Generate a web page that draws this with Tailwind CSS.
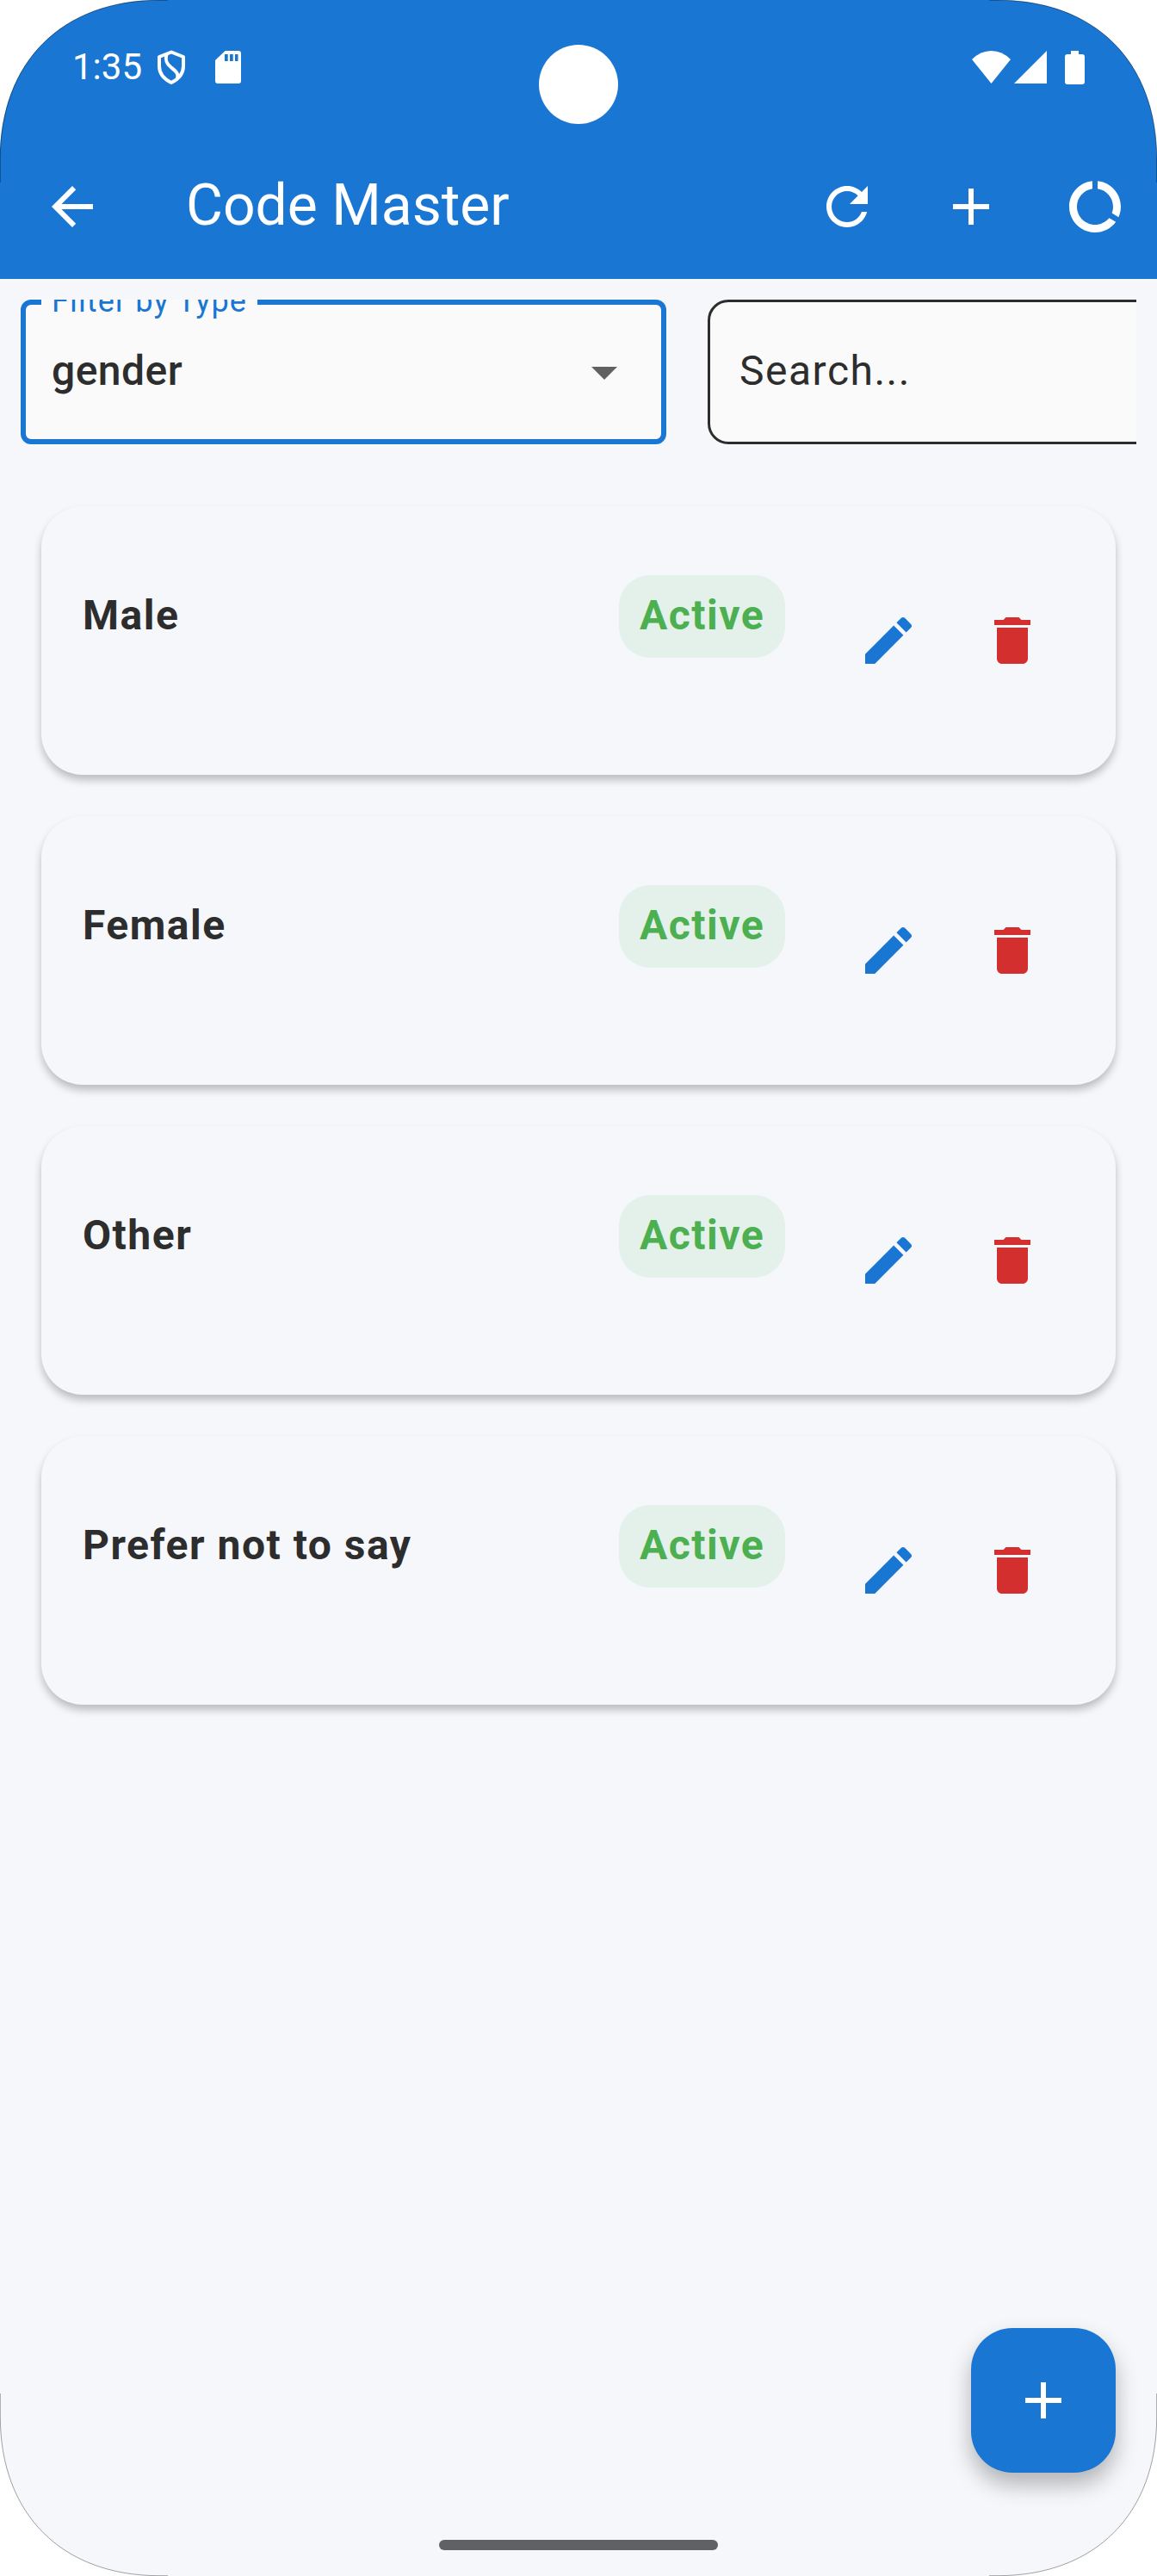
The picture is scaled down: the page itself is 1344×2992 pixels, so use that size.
<!DOCTYPE html>
<html lang="en">
<head>
<meta charset="utf-8">
<title>Code Master</title>
<script src="https://cdn.jsdelivr.net/npm/@tailwindcss/browser@4"></script>
</head>
<body class="bg-white">
<svg class="hidden">
  <symbol id="edit" viewBox="0 0 24 24"><path d="M3 17.25V21h3.75L17.81 9.94l-3.75-3.75L3 17.25zM20.71 7.04c.39-.39.39-1.02 0-1.41l-2.34-2.34c-.39-.39-1.02-.39-1.41 0l-1.83 1.83 3.75 3.75 1.83-1.83z"/></symbol>
  <symbol id="trash" viewBox="0 0 24 24"><path d="M6 19c0 1.1.9 2 2 2h8c1.1 0 2-.9 2-2V7H6v12zM19 4h-3.5l-1-1h-5l-1 1H5v2h14V4z"/></symbol>
  <symbol id="add" viewBox="0 0 24 24"><path d="M19 13h-6v6h-2v-6H5v-2h6V5h2v6h6v2z"/></symbol>
  <symbol id="corner" viewBox="0 0 240 240"><path d="M0 0V185C0 72 72 0 185 0z" fill="#fff"/><path d="M.3 212V185C.3 72 72 .3 185 .3H195" fill="none" stroke="#000" stroke-opacity=".45" stroke-width=".8"/></symbol>
</svg>
<div class="relative flex h-[2992px] w-[1344px] flex-col overflow-hidden bg-[#f5f7fb] font-[Roboto,sans-serif] text-[#2d2d2d]">
  <header class="h-[324px] bg-[#1976d2] text-white">
    <div class="flex h-[156px] items-center px-[84px]">
      <span class="text-[42px] leading-none">1:35</span>
      <svg class="ml-[17px] h-[40px] w-[34px]" viewBox="0 0 34 40" fill="none" stroke="#fff" stroke-width="4" stroke-linejoin="round"><path d="M17 2.500 31 8v11c0 9-6 15-14 19C9 34 3 28 3 19V8z"/><path d="M11.500 5c-2 7 0 11 5 15 6 5 9 7 7.500 13"/></svg>
      <svg class="ml-[34px] h-[38px] w-[30px]" viewBox="0 0 30 38"><path fill="#fff" d="M11.500 0H27q3 0 3 3v32q0 3-3 3H3q-3 0-3-3V11z"/><path fill="#1976d2" d="M11 4h3.700v8H11zM17 4h3.700v8H17zM23 4h3.500v8H23z"/></svg>
      <svg class="ml-auto h-[38px] w-[45px]" viewBox="0 0 45 38" fill="#fff"><path d="M0 10Q10 0 22.500 0T45 10L22.500 38z"/></svg>
      <svg class="ml-[4px] h-[38px] w-[38px]" viewBox="0 0 38 38" fill="#fff"><path d="M38 0v38H0z"/></svg>
      <svg class="ml-[21px] h-[39px] w-[23px]" viewBox="0 0 23 39" fill="#fff"><path d="M7 0h9v4h4q3 0 3 3v29q0 3-3 3H3q-3 0-3-3V7q0-3 3-3h4z"/></svg>
    </div>
    <div class="flex h-[168px] items-center pr-[36px] pl-[48px]">
      <svg class="size-[72px]" viewBox="0 0 24 24" fill="#fff"><path d="M20 11H7.830l5.590-5.590L12 4l-8 8 8 8 1.410-1.410L7.830 13H20v-2z"/></svg>
      <h1 class="mb-[2px] ml-[96px] text-[66px] leading-none">Code Master</h1>
      <div class="ml-auto flex gap-[72px]">
        <svg class="size-[72px]" viewBox="0 0 24 24" fill="#fff"><path d="M17.650 6.350C16.200 4.900 14.210 4 12 4c-4.420 0-7.990 3.580-7.990 8s3.570 8 7.990 8c3.730 0 6.840-2.550 7.730-6h-2.080c-.82 2.330-3.040 4-5.650 4-3.310 0-6-2.690-6-6s2.690-6 6-6c1.660 0 3.140.69 4.220 1.780L13 11h7V4l-2.350 2.350z"/></svg>
        <svg class="size-[72px]" fill="#fff"><use href="#add"/></svg>
        <svg class="size-[72px]" viewBox="0 0 24 24" fill="#fff"><path d="M13 2.050v3.030c3.390.49 6 3.390 6 6.920 0 .9-.18 1.750-.48 2.540l2.600 1.530c.56-1.240.88-2.620.88-4.070 0-5.180-3.950-9.450-9-9.950zM12 19c-3.870 0-7-3.130-7-7 0-3.530 2.610-6.430 6-6.920V2.050c-5.060.5-9 4.760-9 9.950 0 5.520 4.470 10 9.990 10 3.310 0 6.240-1.610 8.060-4.090l-2.600-1.530C16.170 17.980 14.210 19 12 19z"/></svg>
      </div>
    </div>
  </header>

  <section class="mx-[24px] mt-[24px] flex h-[168px] gap-[48px] overflow-hidden">
    <div class="relative flex w-[750px] shrink-0 items-center justify-between rounded-[12px] border-[6px] border-[#1976d2] bg-[#fafafa] px-[30px]">
      <span class="absolute -top-[29px] left-[18px] h-[50px] w-[251px] bg-[#fafafa] pl-[12px] text-[36px] leading-[50px] tracking-[1.125px] whitespace-nowrap text-[#1976d2]">Filter by Type</span>
      <span class="mb-[2px] text-[48px] leading-none font-medium tracking-[0.45px]">gender</span>
      <svg class="size-[72px]" viewBox="0 0 24 24" fill="#616161"><path d="M7 10l5 5 5-5z"/></svg>
    </div>
    <div class="flex w-[750px] shrink-0 items-center rounded-[24px] border-[3px] border-[#2d2d2d] bg-[#fafafa] pl-[34px]">
      <span class="mb-[2px] text-[48px] leading-none tracking-[1.5px]">Search...</span>
    </div>
  </section>

  <main id="list" class="mx-[48px] mt-[72px] flex flex-col gap-[48px]"></main>
  <template id="card">
    <article class="flex h-[312px] items-center rounded-[48px] bg-[#f5f7fb] px-[48px] shadow-[0_6px_10px_rgba(0,0,0,0.24)]">
      <h2 class="mb-[58px] flex-1 text-[48px] leading-[72px] font-bold tracking-[1.5px]"></h2>
      <span class="mb-[56px] flex h-[96px] w-[193px] items-center rounded-[36px] bg-[#e4f0ea] pb-[2px] pl-[24px] text-[48px] leading-none font-bold tracking-[1.5px] text-[#4caf50]">Active</span>
      <div class="mr-[36px] ml-[84px] flex gap-[72px]">
        <svg class="size-[72px]" fill="#1976d2"><use href="#edit"/></svg>
        <svg class="size-[72px]" fill="#d32f2f"><use href="#trash"/></svg>
      </div>
    </article>
  </template>

  <button class="absolute top-[2704px] left-[1128px] flex size-[168px] items-center justify-center rounded-[48px] bg-[#1976d2] shadow-[0_14px_26px_rgba(0,0,0,0.28)]">
    <svg class="size-[72px]" fill="#fff"><use href="#add"/></svg>
  </button>
  <div class="absolute top-[2950px] left-[510px] h-[12px] w-[324px] rounded-full bg-[#606164]"></div>

  <div class="absolute top-[52px] left-[626px] size-[92px] rounded-full bg-white"></div>
  <svg class="absolute top-0 left-0 size-[240px]"><use href="#corner"/></svg>
  <svg class="absolute top-0 right-0 size-[240px] -scale-x-100"><use href="#corner"/></svg>
  <svg class="absolute bottom-0 left-0 size-[240px] -scale-y-100"><use href="#corner"/></svg>
  <svg class="absolute right-0 bottom-0 size-[240px] -scale-100"><use href="#corner"/></svg>
</div>
<script>
  const list = document.getElementById('list');
  const card = document.getElementById('card');
  for (const name of ['Male', 'Female', 'Other', 'Prefer not to say']) {
    const node = card.content.cloneNode(true);
    node.querySelector('h2').textContent = name;
    list.appendChild(node);
  }
</script>
</body>
</html>
